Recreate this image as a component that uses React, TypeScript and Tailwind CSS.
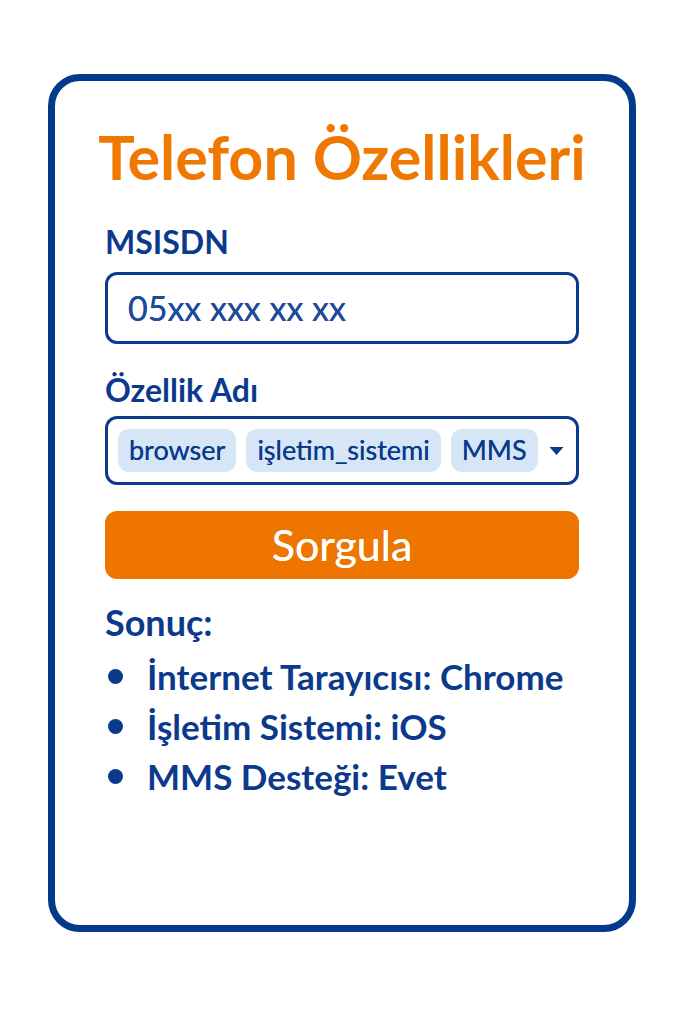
const features = ["browser", "işletim_sistemi", "MMS"];
const results = [
  "İnternet Tarayıcısı: Chrome",
  "İşletim Sistemi: iOS",
  "MMS Desteği: Evet",
];

const App = () => {
  return (
    <div className="min-h-screen bg-white pt-[74px] pl-[48px]" style={{ fontFamily: "Lato, 'Open Sans', sans-serif" }}>
      <div className="w-[588px] h-[858px] border-[7px] border-[#033a8c] rounded-[32px] px-[50px] pt-[41px]">
        <h1 className="-mx-[12px] whitespace-nowrap text-center text-[61px] font-bold leading-[70px] text-[#ef7800]">
          Telefon Özellikleri
        </h1>

        <label className="block mt-[33px] text-[32px] font-bold leading-[34px] text-[#0b3a8c]">MSISDN</label>
        <div className="mt-[13px] h-[72px] border-[3px] border-[#0b3a8c] rounded-[12px] flex items-center px-[20px]">
          <span className="text-[34px] leading-none text-[#1d4a9a] [text-shadow:0_0_0.4px_#1d4a9a]">05xx xxx xx xx</span>
        </div>

        <label className="block mt-[27px] text-[32px] font-bold leading-[38px] text-[#0b3a8c]">Özellik Adı</label>
        <div className="mt-[7px] h-[69px] border-[3px] border-[#0b3a8c] rounded-[12px] flex items-center pl-[10px] pr-[12px] gap-[10px]">
          {features.map((f) => (
            <span key={f} className="shrink-0 h-[43px] px-[11px] flex items-center rounded-[11px] bg-[#d7e6f6] text-[27px] text-[#0b3a8c] [text-shadow:0_0_0.3px_#0b3a8c]">
              {f}
            </span>
          ))}
          <svg className="ml-auto shrink-0" width="15" height="10" viewBox="0 0 15 10">
            <path d="M0.5 1h14L7.5 9z" fill="#0b3a8c" />
          </svg>
        </div>

        <button className="mt-[26px] w-full h-[68px] rounded-[12px] bg-[#ee7600] text-white text-[43px] [text-shadow:0_0_0.5px_#fff]">
          Sorgula
        </button>

        <div className="mt-[23px] text-[36px] font-bold leading-[40px] text-[#0b3a8c]">Sonuç:</div>
        <ul className="mt-[9px]">
          {results.map((r) => (
            <li key={r} className="flex items-center h-[50px] leading-[50px] text-[35px] font-bold text-[#0b3a8c]">
              <span className="w-[15px] h-[15px] rounded-full bg-[#0b3a8c] ml-[3px] mr-[24px]" />
              {r}
            </li>
          ))}
        </ul>
      </div>
    </div>
  );
};

export default App;
